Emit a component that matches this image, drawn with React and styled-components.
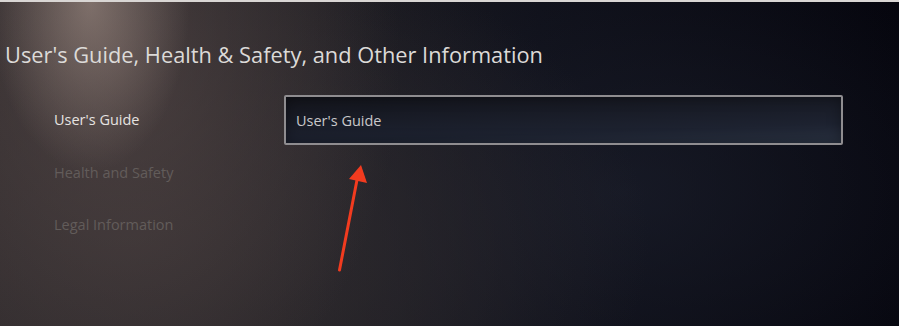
import React from "react";
import styled, { createGlobalStyle } from "styled-components";

const Global = createGlobalStyle`
  html, body { margin: 0; padding: 0; background: #0b0b12; }
  body { font-family: "Open Sans", "Noto Sans", sans-serif; }
`;

const Screen = styled.div`
  position: relative;
  width: 899px;
  height: 326px;
  overflow: hidden;
  box-sizing: border-box;
  border-top: 2px solid #d9d6d4;
  background:
    radial-gradient(ellipse 100px 170px at 90px 0px, rgba(175,155,145,0.55), rgba(175,155,145,0) 100%),
    radial-gradient(ellipse 280px 380px at 120px 60px, rgba(95,80,78,0.55), rgba(95,80,78,0) 100%),
    radial-gradient(ellipse 520px 320px at 130px 240px, rgba(54,48,50,0.9), rgba(54,48,50,0) 100%),
    radial-gradient(ellipse 420px 260px at 620px 190px, rgba(30,34,48,0.6), rgba(30,34,48,0) 100%),
    linear-gradient(90deg, #2b2729 0%, #1e1d22 35%, #0e0f18 60%, #05050d 100%);
  display: flex;
  flex-direction: column;
`;

const Title = styled.h1`
  margin: 0;
  padding: 38px 0 0 5px;
  font-weight: 400;
  font-size: 21.8px;
  line-height: 30px;
  color: #dcdad8;
`;

const Body = styled.div`
  display: flex;
  padding-top: 25px;
`;

const Menu = styled.div`
  width: 284px;
  display: flex;
  flex-direction: column;
`;

const MenuItem = styled.div`
  padding-left: 54px;
  height: 52.5px;
  line-height: 50px;
  font-size: 14.5px;
  color: ${(p) => (p.$active ? "#e6e3e1" : "#625c5a")};
`;

const Field = styled.div`
  width: 559px;
  height: 50px;
  box-sizing: border-box;
  border: 2px solid #8f8d90;
  border-radius: 2px;
  background: linear-gradient(178deg, #13141b 0%, #1d2230 70%, #2a3242 100%);
  box-shadow: inset 0 0 14px rgba(0,0,0,0.35);
  display: flex;
  align-items: center;
  padding-left: 10px;
  font-size: 14.5px;
  color: #c9c8ca;
`;

const Arrow = styled.svg`
  position: absolute;
  left: 0;
  top: 0;
  pointer-events: none;
`;

export default function App() {
  return (
    <>
      <Global />
      <Screen>
        <Title>User's Guide, Health &amp; Safety, and Other Information</Title>
        <Body>
          <Menu>
            <MenuItem $active>User's Guide</MenuItem>
            <MenuItem>Health and Safety</MenuItem>
            <MenuItem>Legal Information</MenuItem>
          </Menu>
          <Field>User's Guide</Field>
        </Body>
        <Arrow width="899" height="326" viewBox="0 0 899 326">
          <line x1="339.5" y1="268" x2="357" y2="178" stroke="#f23b1f" strokeWidth="3" strokeLinecap="round" />
          <polygon points="361,163 367,181 349,177" fill="#f23b1f" />
        </Arrow>
      </Screen>
    </>
  );
}
